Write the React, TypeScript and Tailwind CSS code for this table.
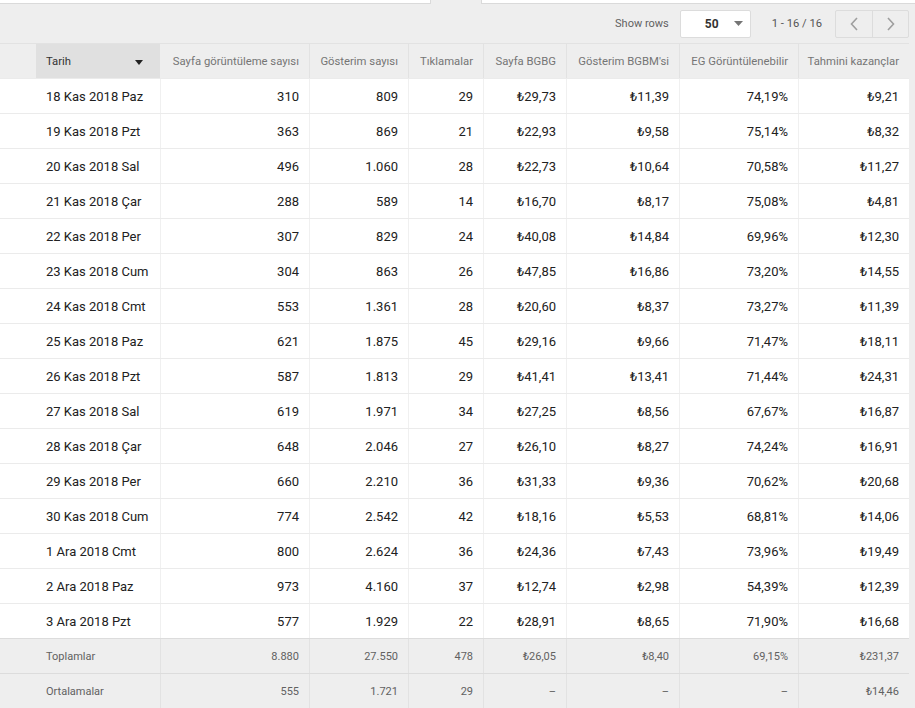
import React from "react";

const rows: string[][] = [
  ["18 Kas 2018 Paz", "310", "809", "29", "₺29,73", "₺11,39", "74,19%", "₺9,21"],
  ["19 Kas 2018 Pzt", "363", "869", "21", "₺22,93", "₺9,58", "75,14%", "₺8,32"],
  ["20 Kas 2018 Sal", "496", "1.060", "28", "₺22,73", "₺10,64", "70,58%", "₺11,27"],
  ["21 Kas 2018 Çar", "288", "589", "14", "₺16,70", "₺8,17", "75,08%", "₺4,81"],
  ["22 Kas 2018 Per", "307", "829", "24", "₺40,08", "₺14,84", "69,96%", "₺12,30"],
  ["23 Kas 2018 Cum", "304", "863", "26", "₺47,85", "₺16,86", "73,20%", "₺14,55"],
  ["24 Kas 2018 Cmt", "553", "1.361", "28", "₺20,60", "₺8,37", "73,27%", "₺11,39"],
  ["25 Kas 2018 Paz", "621", "1.875", "45", "₺29,16", "₺9,66", "71,47%", "₺18,11"],
  ["26 Kas 2018 Pzt", "587", "1.813", "29", "₺41,41", "₺13,41", "71,44%", "₺24,31"],
  ["27 Kas 2018 Sal", "619", "1.971", "34", "₺27,25", "₺8,56", "67,67%", "₺16,87"],
  ["28 Kas 2018 Çar", "648", "2.046", "27", "₺26,10", "₺8,27", "74,24%", "₺16,91"],
  ["29 Kas 2018 Per", "660", "2.210", "36", "₺31,33", "₺9,36", "70,62%", "₺20,68"],
  ["30 Kas 2018 Cum", "774", "2.542", "42", "₺18,16", "₺5,53", "68,81%", "₺14,06"],
  ["1 Ara 2018 Cmt", "800", "2.624", "36", "₺24,36", "₺7,43", "73,96%", "₺19,49"],
  ["2 Ara 2018 Paz", "973", "4.160", "37", "₺12,74", "₺2,98", "54,39%", "₺12,39"],
  ["3 Ara 2018 Pzt", "577", "1.929", "22", "₺28,91", "₺8,65", "71,90%", "₺16,68"],
];

const totals = ["Toplamlar", "8.880", "27.550", "478", "₺26,05", "₺8,40", "69,15%", "₺231,37"];
const avgs = ["Ortalamalar", "555", "1.721", "29", "–", "–", "–", "₺14,46"];

const headers = [
  "Sayfa görüntüleme sayısı",
  "Gösterim sayısı",
  "Tıklamalar",
  "Sayfa BGBG",
  "Gösterim BGBM'si",
  "EG Görüntülenebilir",
  "Tahmini kazançlar",
];

const grid =
  "grid grid-cols-[36px_124px_149px_99px_75px_83px_113px_119px_111px] w-[909px]";

export default function App() {
  return (
    <div
      className="w-[915px] h-[708px] overflow-hidden bg-[#eeeeee]"
      style={{ fontFamily: "Roboto, 'Liberation Sans', sans-serif" }}
    >
      {/* top tabs strip */}
      <div className="flex h-[4px]">
        <div className="w-[431px] h-[4px] bg-white border-b border-r border-[#dadada]" />
        <div className="w-[50px]" />
        <div className="flex-1 h-[4px] bg-white border-b border-l border-[#dadada]" />
      </div>

      {/* toolbar */}
      <div className="flex items-center justify-end h-[39px] pr-[6px] w-[915px]">
        <span className="text-[11px] text-[#616161] mr-[11px] pt-[2px]">Show rows</span>
        <div className="w-[71px] h-[28px] bg-white border border-[#dcdcdc] rounded-[2px] flex items-center pl-[24px] pr-[7px]">
          <span className="text-[12px] font-bold text-[#333]">50</span>
          <svg className="ml-auto" width="9" height="5" viewBox="0 0 9 5">
            <path d="M0 0 L9 0 L4.5 5 Z" fill="#757575" />
          </svg>
        </div>
        <span className="text-[11.2px] text-[#555] ml-[21px] mr-[13px] pt-[2px]">1 - 16 / 16</span>
        <div className="flex h-[28px] border border-[#dcdcdc] rounded-[2px]">
          <div className="w-[37px] flex items-center justify-center border-r border-[#dcdcdc]">
            <svg width="8" height="14" viewBox="0 0 8 14">
              <path d="M7 1 L1.5 7 L7 13" fill="none" stroke="#9e9e9e" strokeWidth="1.6" />
            </svg>
          </div>
          <div className="w-[35px] flex items-center justify-center">
            <svg width="8" height="14" viewBox="0 0 8 14">
              <path d="M1 1 L6.5 7 L1 13" fill="none" stroke="#9e9e9e" strokeWidth="1.6" />
            </svg>
          </div>
        </div>
      </div>

      {/* header */}
      <div className={`${grid} h-[35px] border-t border-[#e2e2e2] bg-[#eeeeee] text-[11.3px] text-[#757575]`}>
        <div />
        <div className="bg-[#e0e0e0] flex items-center justify-between pl-[10px] pr-[17px] pt-[2px] text-[#333]">
          <span>Tarih</span>
          <svg width="8" height="5" viewBox="0 0 8 5">
            <path d="M0 0 L8 0 L4 5 Z" fill="#222" />
          </svg>
        </div>
        {headers.map((h, i) => (
          <div
            key={i}
            className={`flex items-center justify-end pr-[10px] pt-[2px] whitespace-nowrap ${i > 0 ? "border-l border-[#e2e2e2]" : ""}`}
          >
            {h}
          </div>
        ))}
      </div>

      {/* body */}
      <div className="bg-white w-[909px]">
        {rows.map((r, ri) => (
          <div key={ri} className={`${grid} h-[35px] border-t border-[#ebebeb] text-[13px] text-[#212121]`}>
            <div />
            <div className="flex items-center pl-[10px] pt-[2px] whitespace-nowrap">{r[0]}</div>
            {r.slice(1).map((c, ci) => (
              <div key={ci} className="flex items-center justify-end pr-[10px] pt-[2px] border-l border-[#f0f0f0] whitespace-nowrap">
                {c}
              </div>
            ))}
          </div>
        ))}
      </div>

      {/* totals */}
      {[totals, avgs].map((r, ri) => (
        <div key={ri} className={`${grid} h-[35px] border-t border-[#dcdcdc] bg-[#eeeeee] text-[11px] text-[#616161]`}>
          <div />
          <div className="flex items-center pl-[10px] pt-[2px] whitespace-nowrap">{r[0]}</div>
          {r.slice(1).map((c, ci) => (
            <div key={ci} className="flex items-center justify-end pr-[10px] pt-[2px] border-l border-[#e2e2e2] whitespace-nowrap">
              {c}
            </div>
          ))}
        </div>
      ))}
    </div>
  );
}
